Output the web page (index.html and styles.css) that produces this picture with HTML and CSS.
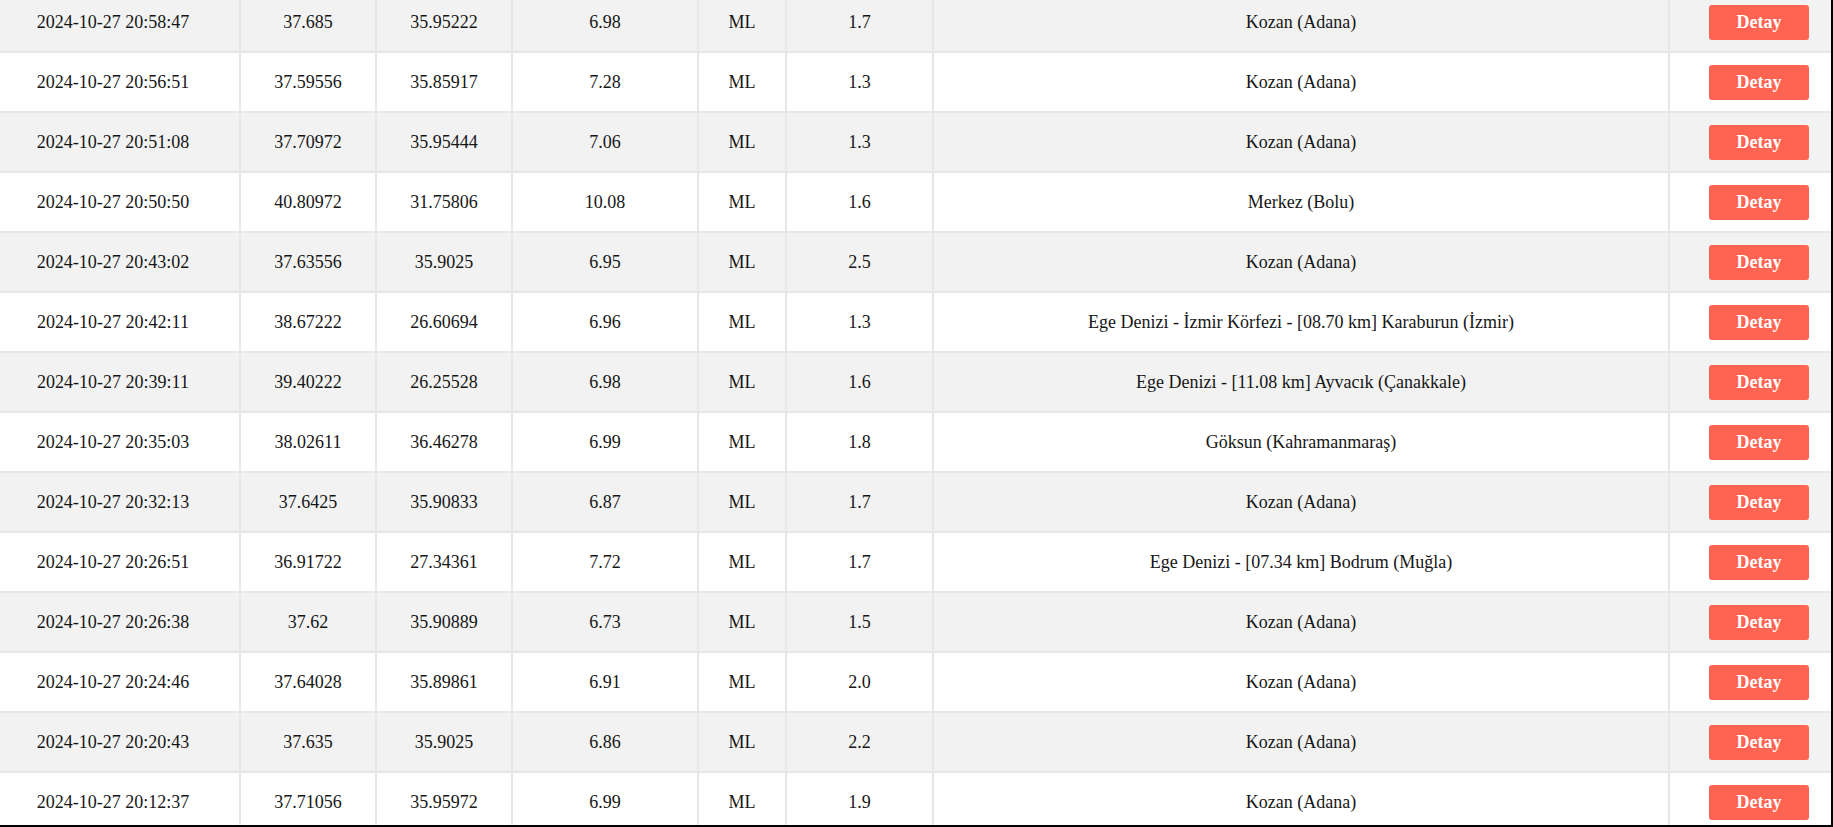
FILE: index.html
```html
<!DOCTYPE html>
<html lang="tr">
<head>
<meta charset="utf-8">
<title>Son Depremler</title>
<link rel="stylesheet" href="styles.css">
</head>
<body>
<div class="frame">
  <table class="quakes">
    <colgroup>
      <col class="c-date"><col class="c-lat"><col class="c-lon"><col class="c-depth"><col class="c-type"><col class="c-mag"><col class="c-loc"><col class="c-act">
    </colgroup>
    <tbody>
      <tr><td>2024-10-27 20:58:47</td><td>37.685</td><td>35.95222</td><td>6.98</td><td>ML</td><td>1.7</td><td>Kozan (Adana)</td><td><button class="btn">Detay</button></td></tr>
      <tr><td>2024-10-27 20:56:51</td><td>37.59556</td><td>35.85917</td><td>7.28</td><td>ML</td><td>1.3</td><td>Kozan (Adana)</td><td><button class="btn">Detay</button></td></tr>
      <tr><td>2024-10-27 20:51:08</td><td>37.70972</td><td>35.95444</td><td>7.06</td><td>ML</td><td>1.3</td><td>Kozan (Adana)</td><td><button class="btn">Detay</button></td></tr>
      <tr><td>2024-10-27 20:50:50</td><td>40.80972</td><td>31.75806</td><td>10.08</td><td>ML</td><td>1.6</td><td>Merkez (Bolu)</td><td><button class="btn">Detay</button></td></tr>
      <tr><td>2024-10-27 20:43:02</td><td>37.63556</td><td>35.9025</td><td>6.95</td><td>ML</td><td>2.5</td><td>Kozan (Adana)</td><td><button class="btn">Detay</button></td></tr>
      <tr><td>2024-10-27 20:42:11</td><td>38.67222</td><td>26.60694</td><td>6.96</td><td>ML</td><td>1.3</td><td>Ege Denizi - İzmir Körfezi - [08.70 km] Karaburun (İzmir)</td><td><button class="btn">Detay</button></td></tr>
      <tr><td>2024-10-27 20:39:11</td><td>39.40222</td><td>26.25528</td><td>6.98</td><td>ML</td><td>1.6</td><td>Ege Denizi - [11.08 km] Ayvacık (Çanakkale)</td><td><button class="btn">Detay</button></td></tr>
      <tr><td>2024-10-27 20:35:03</td><td>38.02611</td><td>36.46278</td><td>6.99</td><td>ML</td><td>1.8</td><td>Göksun (Kahramanmaraş)</td><td><button class="btn">Detay</button></td></tr>
      <tr><td>2024-10-27 20:32:13</td><td>37.6425</td><td>35.90833</td><td>6.87</td><td>ML</td><td>1.7</td><td>Kozan (Adana)</td><td><button class="btn">Detay</button></td></tr>
      <tr><td>2024-10-27 20:26:51</td><td>36.91722</td><td>27.34361</td><td>7.72</td><td>ML</td><td>1.7</td><td>Ege Denizi - [07.34 km] Bodrum (Muğla)</td><td><button class="btn">Detay</button></td></tr>
      <tr><td>2024-10-27 20:26:38</td><td>37.62</td><td>35.90889</td><td>6.73</td><td>ML</td><td>1.5</td><td>Kozan (Adana)</td><td><button class="btn">Detay</button></td></tr>
      <tr><td>2024-10-27 20:24:46</td><td>37.64028</td><td>35.89861</td><td>6.91</td><td>ML</td><td>2.0</td><td>Kozan (Adana)</td><td><button class="btn">Detay</button></td></tr>
      <tr><td>2024-10-27 20:20:43</td><td>37.635</td><td>35.9025</td><td>6.86</td><td>ML</td><td>2.2</td><td>Kozan (Adana)</td><td><button class="btn">Detay</button></td></tr>
      <tr><td>2024-10-27 20:12:37</td><td>37.71056</td><td>35.95972</td><td>6.99</td><td>ML</td><td>1.9</td><td>Kozan (Adana)</td><td><button class="btn">Detay</button></td></tr>
    </tbody>
  </table>
</div>
</body>
</html>
```
FILE: styles.css
```css
html, body {
  margin: 0;
  padding: 0;
  background: #ffffff;
  overflow: hidden;
}

.frame {
  width: 1831px;
  height: 825px;
  overflow: hidden;
  border-right: 2px solid #000;
  border-bottom: 2px solid #000;
  background: #ffffff;
}

.quakes {
  table-layout: fixed;
  border-collapse: collapse;
  width: 1863px;
  margin-left: -15px;
  margin-top: -9px;
  font-family: "Liberation Serif", "Times New Roman", serif;
  font-size: 18px;
  color: #161616;
}

.c-date { width: 254px; }
.c-lat { width: 136px; }
.c-lon { width: 136px; }
.c-depth { width: 186px; }
.c-type { width: 88px; }
.c-mag { width: 147px; }
.c-loc { width: 736px; }
.c-act { width: 180px; }

.quakes td {
  height: 58px;
  padding: 0;
  border: 2px solid #e7e7e7;
  text-align: center;
  vertical-align: middle;
  white-space: nowrap;
}

.quakes tr:nth-child(odd) td { background: #f2f2f2; }
.quakes tr:nth-child(even) td { background: #ffffff; }

.btn {
  display: inline-block;
  width: 100px;
  height: 35px;
  border: none;
  border-radius: 3px;
  background: #ff6352;
  color: #ffffff;
  font-family: "Liberation Serif", "Times New Roman", serif;
  font-weight: bold;
  font-size: 18px;
  padding: 0;
  vertical-align: middle;
}
```
